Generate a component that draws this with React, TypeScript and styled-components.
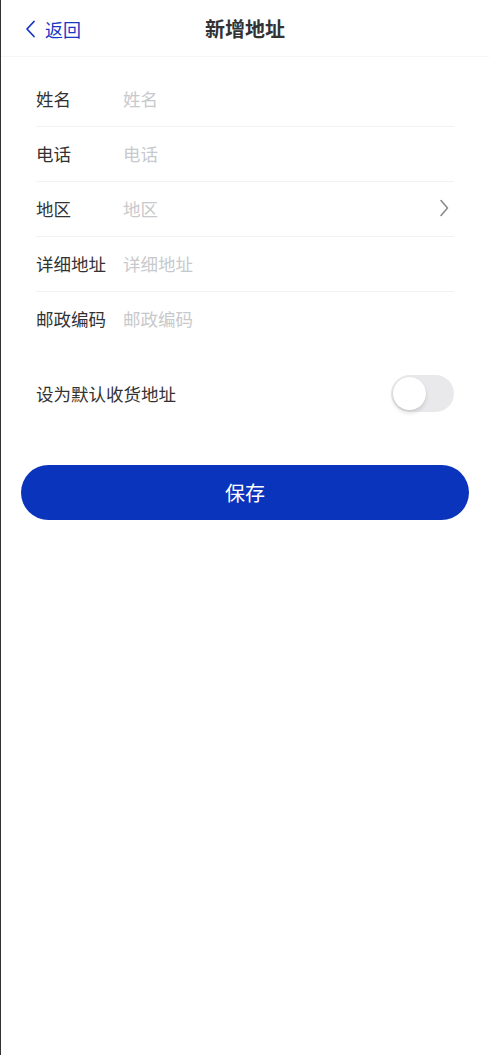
import React, { useState } from "react";
import styled, { createGlobalStyle } from "styled-components";

const Global = createGlobalStyle`
  html, body { margin: 0; padding: 0; background: #fff; }
  body { font-family: "Noto Sans CJK SC", "Noto Sans", sans-serif; color: #323233; }
  * { box-sizing: border-box; }
`;

const Page = styled.div`
  min-height: 100vh;
  border-left: 1px solid #333;
  background: #fff;
`;

const Header = styled.header`
  height: 57px;
  display: grid;
  grid-template-columns: 1fr auto 1fr;
  align-items: center;
  border-bottom: 1px solid #f5f5f6;
`;

const Back = styled.div`
  display: flex;
  align-items: center;
  gap: 9px;
  padding-left: 24px;
  padding-top: 1px;
  color: #1737c4;
  font-size: 18px;
`;

const Title = styled.div`
  font-size: 20px;
  font-weight: 700;
  color: #323233;
`;

const Form = styled.div`
  margin-top: 15px;
  padding: 0 35px;
`;

const Row = styled.div<{ $last?: boolean }>`
  height: 55px;
  padding-bottom: 2px;
  display: flex;
  align-items: center;
  border-bottom: ${(p) => (p.$last ? "none" : "1px solid #f2f2f3")};
`;

const Label = styled.div`
  width: 87px;
  flex-shrink: 0;
  font-size: 17.5px;
  color: #323233;
`;

const Placeholder = styled.div`
  flex: 1;
  font-size: 17.5px;
  color: #c8c9cc;
`;

const ToggleRow = styled.div`
  margin-top: 19px;
  height: 55px;
  padding: 0 35px;
  display: flex;
  align-items: center;
  justify-content: space-between;
  font-size: 17.5px;
  color: #323233;
`;

const Switch = styled.div<{ $on: boolean }>`
  width: 63px;
  height: 37px;
  border-radius: 19px;
  background: ${(p) => (p.$on ? "#0b34bc" : "#e9e9eb")};
  position: relative;
  cursor: pointer;
`;

const Knob = styled.div<{ $on: boolean }>`
  position: absolute;
  top: 2px;
  left: ${(p) => (p.$on ? "28px" : "2px")};
  width: 33px;
  height: 33px;
  border-radius: 50%;
  background: #fff;
  box-shadow: 0 3px 4px rgba(0, 0, 0, 0.12), 0 0 1px rgba(0, 0, 0, 0.1);
`;

const SaveButton = styled.button`
  display: block;
  margin: 44px 20px 0;
  width: calc(100% - 40px);
  height: 55px;
  border: none;
  border-radius: 28px;
  background: #0b34bc;
  color: #fff;
  font-family: inherit;
  font-size: 20px;
`;

const fields = [
  { label: "姓名", arrow: false },
  { label: "电话", arrow: false },
  { label: "地区", arrow: true },
  { label: "详细地址", arrow: false },
  { label: "邮政编码", arrow: false },
];

export default function App() {
  const [on, setOn] = useState(false);
  return (
    <Page>
      <Global />
      <Header>
        <Back>
          <svg width="11" height="18" viewBox="0 0 11 18" fill="none">
            <path d="M9 1.5 L2 9 L9 16.5" stroke="#1737c4" strokeWidth="1.8" strokeLinecap="round" strokeLinejoin="round" />
          </svg>
          <span>返回</span>
        </Back>
        <Title>新增地址</Title>
        <div />
      </Header>
      <Form>
        {fields.map((f, i) => (
          <Row key={f.label} $last={i === fields.length - 1}>
            <Label>{f.label}</Label>
            <Placeholder>{f.label}</Placeholder>
            {f.arrow && (
              <svg width="16" height="18" viewBox="0 0 16 18" fill="none">
                <path d="M3 1.5 L9.5 9 L3 16.5" stroke="#8a8b8e" strokeWidth="1.6" strokeLinecap="round" strokeLinejoin="round" />
              </svg>
            )}
          </Row>
        ))}
      </Form>
      <ToggleRow>
        <span>设为默认收货地址</span>
        <Switch $on={on} onClick={() => setOn(!on)}>
          <Knob $on={on} />
        </Switch>
      </ToggleRow>
      <SaveButton>保存</SaveButton>
    </Page>
  );
}
